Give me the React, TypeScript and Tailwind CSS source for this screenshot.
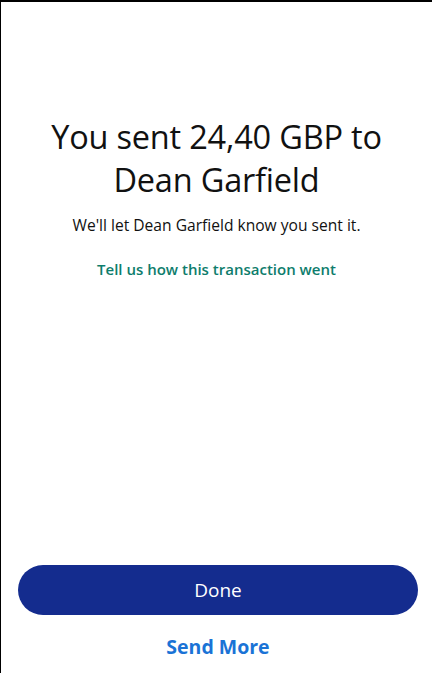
export default function App() {
  return (
    <div
      className="h-[673px] w-[432px] flex flex-col bg-white border-t-2 border-l border-black text-[#111]"
      style={{ fontFamily: '"Open Sans", "Noto Sans", sans-serif' }}
    >
      <div className="flex flex-col items-center text-center px-4 pt-[113px]">
        <h1 className="text-[32.5px] leading-[43px] font-normal tracking-[-0.2px]">
          You sent 24,40 GBP to
          <br />
          Dean Garfield
        </h1>
        <p className="mt-[14px] text-[15.6px] leading-5">We'll let Dean Garfield know you sent it.</p>
        <a className="mt-[24px] text-[15px] leading-5 font-semibold text-[#0e7d6c]">
          Tell us how this transaction went
        </a>
      </div>
      <div className="flex-1" />
      <div className="flex flex-col items-center pl-[17px] pr-[14px] pb-[14px]">
        <button className="w-full h-[50px] rounded-full bg-[#142c8e] text-white text-[19px]">Done</button>
        <a className="mt-[20px] text-[19.5px] leading-6 font-bold text-[#1a73d6]">Send More</a>
      </div>
    </div>
  )
}
